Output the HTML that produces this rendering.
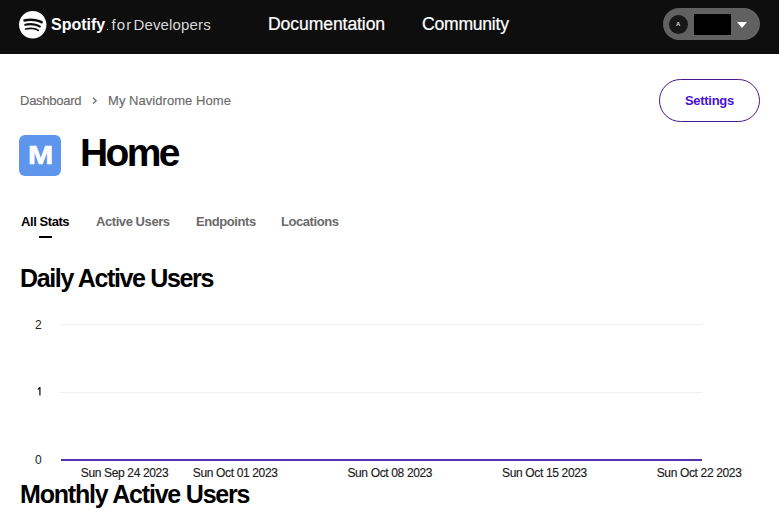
<!DOCTYPE html>
<html><head><meta charset="utf-8">
<style>
html,body{margin:0;padding:0;background:#fff;width:779px;height:515px;overflow:hidden;position:relative;font-family:"Liberation Sans",sans-serif;}
.t{position:absolute;white-space:nowrap;line-height:1;}
.xl{top:467px;font-size:12px;color:#1a1a1a;letter-spacing:-0.35px;-webkit-text-stroke:0.15px #1a1a1a;transform:translateX(-50%);}
#hdr{position:absolute;left:0;top:0;width:779px;height:54px;background:#0e0e0e;}
</style></head><body>
<div id="hdr"></div>
<svg style="position:absolute;left:19px;top:11px" width="27.5" height="27.5" viewBox="0 0 24 24"><path fill="#fff" d="M12 0C5.4 0 0 5.4 0 12s5.4 12 12 12 12-5.4 12-12S18.66 0 12 0zm5.521 17.34c-.24.359-.66.48-1.021.24-2.82-1.74-6.36-2.101-10.561-1.141-.418.122-.779-.179-.899-.539-.12-.421.18-.78.54-.9 4.56-1.021 8.520-.6 11.640 1.32.42.18.479.659.301 1.020zm1.44-3.3c-.301.42-.841.6-1.262.3-3.239-1.98-8.159-2.58-11.939-1.38-.479.12-1.020-.12-1.140-.6-.12-.48.12-1.021.6-1.141C9.6 9.9 15 10.561 18.72 12.840c.361.181.54.78.241 1.2zm.12-3.36C15.24 8.4 8.82 8.16 5.16 9.301c-.6.179-1.2-.181-1.380-.721-.18-.601.18-1.2.72-1.381 4.26-1.26 11.28-1.020 15.721 1.621.539.3.719 1.020.419 1.560-.299.421-1.020.599-1.559.3z"/></svg>
<div class="t" style="left:51px;top:17px;font-size:16px;font-weight:bold;color:#fff">Spotify</div>
<div class="t" style="left:106.5px;top:28.6px;width:1.6px;height:1.6px;background:#bbb;border-radius:1px"></div>
<div class="t" style="left:111.5px;top:17px;font-size:15px;color:#d8d8d8;letter-spacing:1.1px">for</div>
<div class="t" style="left:133.5px;top:17px;font-size:15px;color:#d8d8d8;letter-spacing:0.15px">Developers</div>
<div class="t" style="left:268px;top:15.6px;font-size:17.6px;color:#fff;letter-spacing:-0.1px;-webkit-text-stroke:0.2px #fff">Documentation</div>
<div class="t" style="left:422px;top:15.5px;font-size:17.6px;color:#fff;letter-spacing:-0.25px;-webkit-text-stroke:0.2px #fff">Community</div>
<div style="position:absolute;left:663px;top:8px;width:97px;height:32px;border-radius:16px;background:#616161"></div>
<div style="position:absolute;left:669px;top:15px;width:19px;height:19px;border-radius:50%;background:#171717"></div>
<div class="t" style="left:676px;top:21px;font-size:6px;font-weight:bold;color:#ddd">A</div>
<div style="position:absolute;left:694px;top:14px;width:37px;height:21px;background:#000"></div>
<div style="position:absolute;left:737.3px;top:22px;width:0;height:0;border-left:5.95px solid transparent;border-right:5.95px solid transparent;border-top:6.2px solid #fff"></div>

<div class="t" style="left:20px;top:94px;font-size:13px;color:#6a6a6a;letter-spacing:-0.25px;-webkit-text-stroke:0.15px #6a6a6a">Dashboard</div>
<svg style="position:absolute;left:90px;top:95px" width="10" height="12" viewBox="0 0 10 12"><polyline points="3.4,3.2 6.3,5.7 3.4,8.3" fill="none" stroke="#707070" stroke-width="1.25" stroke-linecap="round" stroke-linejoin="round"/></svg>
<div class="t" style="left:108px;top:94px;font-size:13px;color:#6a6a6a;letter-spacing:0.05px;-webkit-text-stroke:0.15px #6a6a6a">My Navidrome Home</div>

<div style="position:absolute;left:659px;top:79px;width:99px;height:41px;border:1px solid #45198c;border-radius:22px"></div>
<div class="t" style="left:685px;top:94px;font-size:13px;font-weight:bold;color:#4a10d4;letter-spacing:-0.3px">Settings</div>

<div style="position:absolute;left:19px;top:135px;width:42px;height:41px;border-radius:6px;background:#5e96ed"></div>
<div class="t" style="left:27.6px;top:142.3px;font-size:26.6px;font-weight:bold;color:#fff;-webkit-text-stroke:0.6px #fff;transform:scaleX(1.14);transform-origin:0 0">M</div>
<div class="t" style="left:80px;top:132.8px;font-size:39px;font-weight:bold;color:#000;letter-spacing:-2.6px">Home</div>

<div class="t" style="left:21px;top:214.7px;font-size:13px;font-weight:bold;color:#000;letter-spacing:-0.43px">All Stats</div>
<div style="position:absolute;left:39px;top:236px;width:13px;height:2px;background:#000"></div>
<div class="t" style="left:96px;top:214.7px;font-size:13px;font-weight:bold;color:#6a6a6a;letter-spacing:-0.43px">Active Users</div>
<div class="t" style="left:196px;top:214.7px;font-size:13px;font-weight:bold;color:#6a6a6a;letter-spacing:-0.43px">Endpoints</div>
<div class="t" style="left:281px;top:214.7px;font-size:13px;font-weight:bold;color:#6a6a6a;letter-spacing:-0.43px">Locations</div>

<div class="t" style="left:20px;top:266px;font-size:25px;font-weight:bold;color:#000;letter-spacing:-1.35px">Daily Active Users</div>

<div class="t" style="left:35px;top:319px;font-size:12px;color:#222">2</div>
<svg style="position:absolute;left:34px;top:384px" width="10" height="14" viewBox="0 0 10 14"><path d="M5.25 3.1 H6.55 V11.6 H5.25 V5.3 L3.7 6.0 V4.8 Z" fill="#1c1c1c"/></svg>
<div class="t" style="left:35px;top:454px;font-size:12px;color:#222">0</div>
<div style="position:absolute;left:60px;top:324px;width:642px;height:1px;background:#efefef"></div>
<div style="position:absolute;left:60px;top:392px;width:642px;height:1px;background:#efefef"></div>
<div style="position:absolute;left:61px;top:459px;width:641px;height:2px;background:#5530b0"></div>

<div class="t xl" style="left:124.5px">Sun Sep 24 2023</div>
<div class="t xl" style="left:235.2px">Sun Oct 01 2023</div>
<div class="t xl" style="left:389.8px">Sun Oct 08 2023</div>
<div class="t xl" style="left:544.5px">Sun Oct 15 2023</div>
<div class="t xl" style="left:699.1px">Sun Oct 22 2023</div>

<div class="t" style="left:20px;top:482px;font-size:25px;font-weight:bold;color:#000;letter-spacing:-1.2px">Monthly Active Users</div>
</body></html>
